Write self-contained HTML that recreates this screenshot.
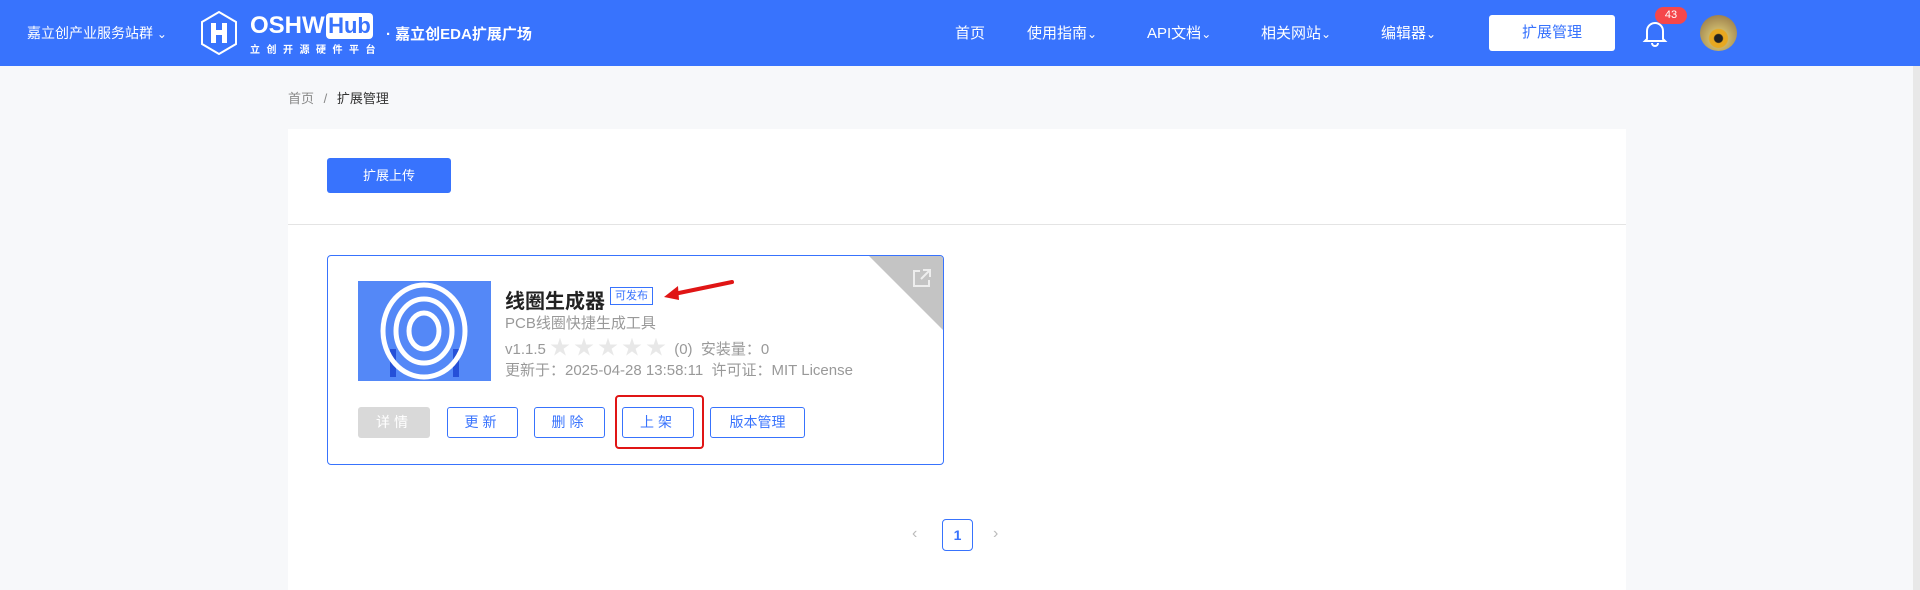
<!DOCTYPE html>
<html><head><meta charset="utf-8"><style>
*{margin:0;padding:0;box-sizing:border-box}
body{width:1920px;height:590px;overflow:hidden;background:#f7f8fa;font-family:"Liberation Sans","Noto Sans CJK SC",sans-serif;position:relative}
.a{position:absolute;white-space:nowrap}
.hd{position:absolute;left:0;top:0;width:1920px;height:66px;background:#3873fd}
.nav{color:#fff;font-size:15px;top:22px}
.btn{position:absolute;border:1px solid #3873fd;border-radius:3px;color:#3873fd;font-size:14px;text-align:center;line-height:29px;background:#fff;letter-spacing:4px}
.ln{font-size:15px;color:#999;line-height:20px;height:20px}
</style></head><body>
<div class="hd"></div>
<div class="a" style="left:27px;top:23px;color:#fff;font-size:14px">嘉立创产业服务站群 <span style="font-size:12px">&#8964;</span></div>
<svg class="a" style="left:200px;top:11px" width="38" height="44" viewBox="0 0 38 44"><polygon points="19,1 36,11 36,33 19,43 2,33 2,11" fill="none" stroke="#fff" stroke-width="2"/><path d="M11,12 V32 H16 V24 H22 V32 H27 V12 H22 V19 H16 V12 Z" fill="#fff"/></svg>
<div class="a" style="left:250px;top:12px;color:#fff;font-size:24px;font-weight:bold">OSHW</div>
<div class="a" style="left:326px;top:13px;width:47px;height:26px;background:#fff;border-radius:4px;color:#3873fd;font-size:22px;font-weight:bold;text-align:center;line-height:26px">Hub</div>
<div class="a" style="left:250px;top:41px;color:#fff;font-size:10px;letter-spacing:6.5px;font-weight:bold">立创开源硬件平台</div>
<div class="a" style="left:386px;top:23px;color:#fff;font-size:15px;font-weight:bold">· 嘉立创EDA扩展广场</div>
<div class="a nav" style="left:955px">首页</div>
<div class="a nav" style="left:1027px">使用指南<span style="font-size:12px">&#8964;</span></div>
<div class="a nav" style="left:1147px">API文档<span style="font-size:12px">&#8964;</span></div>
<div class="a nav" style="left:1261px">相关网站<span style="font-size:12px">&#8964;</span></div>
<div class="a nav" style="left:1381px">编辑器<span style="font-size:12px">&#8964;</span></div>
<div class="a" style="left:1489px;top:15px;width:126px;height:36px;background:#fff;border-radius:3px;color:#3873fd;font-size:15px;text-align:center;line-height:36px">扩展管理</div>
<svg class="a" style="left:1642px;top:19px" width="26" height="28" viewBox="0 0 26 28"><path d="M5,20 V12 A8,8 0 0 1 21,12 V20 L23,22 H3 Z M10,24 A3,3 0 0 0 16,24" fill="none" stroke="#fff" stroke-width="2"/></svg>
<div class="a" style="left:1655px;top:7px;width:32px;height:17px;background:#f5474b;border-radius:9px;color:#fff;font-size:11px;text-align:center;line-height:17px">43</div>
<div class="a" style="left:1700px;top:15px;width:37px;height:36px;border-radius:50%;background:radial-gradient(circle at 50% 65%,#222 0 4px,#e8a820 5px 9px,#c9b46a 10px,#8a6a40)"></div>
<div class="a" style="left:1913px;top:66px;width:7px;height:524px;background:#e8e8e8"></div>
<div class="a" style="left:288px;top:88px;font-size:13px;color:#888">首页 <span style="margin:0 6px">/</span> <span style="color:#333">扩展管理</span></div>
<div class="a" style="left:288px;top:129px;width:1338px;height:461px;background:#fff"></div>
<div class="a" style="left:327px;top:158px;width:124px;height:35px;background:#3873fd;border-radius:3px;color:#fff;font-size:13px;text-align:center;line-height:35px">扩展上传</div>
<div class="a" style="left:288px;top:224px;width:1338px;height:1px;background:#e4e4e4"></div>
<div class="a" style="left:327px;top:255px;width:617px;height:210px;border:1px solid #3873fd;border-radius:4px;background:#fff;overflow:hidden">
<div class="a" style="right:0;top:0;width:0;height:0;border-top:74px solid #c4c4c4;border-left:74px solid transparent"></div>
<svg class="a" style="left:583px;top:12px" width="22" height="20" viewBox="0 0 22 20"><path d="M9,3 H3 V18 H18 V12 M12,2 H19 V9 M19,2 L10,11" fill="none" stroke="#eee" stroke-width="2"/></svg>
</div>
<svg class="a" style="left:358px;top:281px" width="133" height="100" viewBox="0 0 133 100"><rect width="133" height="100" fill="#5488f7"/><rect x="32" y="68" width="6" height="28" fill="#2550d8"/><rect x="95" y="68" width="6" height="28" fill="#2550d8"/><g fill="none" stroke="#fff" stroke-width="5"><ellipse cx="66" cy="50" rx="41" ry="46"/><ellipse cx="66" cy="50" rx="28" ry="32"/><ellipse cx="66" cy="50" rx="15" ry="18"/></g></svg>
<div class="a" style="left:505px;top:285px;font-size:20px;font-weight:bold;color:#222">线圈生成器</div>
<div class="a" style="left:610px;top:287px;width:43px;height:18px;border:1px solid #3873fd;color:#3873fd;font-size:11px;text-align:center;line-height:16px">可发布</div>
<svg class="a" style="left:660px;top:277px" width="80" height="28" viewBox="0 0 80 28"><path d="M72,5 L14,17" stroke="#e01515" stroke-width="4" stroke-linecap="round"/><path d="M4,20 L18,9 L19,23 Z" fill="#e01515"/></svg>
<div class="a ln" style="left:505px;top:314px">PCB线圈快捷生成工具</div>
<div class="a ln" style="left:505px;top:338px">v1.1.5 <span style="color:#e8e8e8;font-size:20px;line-height:20px;letter-spacing:4px">★★★★★</span> (0)&nbsp; 安装量：0</div>
<div class="a ln" style="left:505px;top:361px">更新于：2025-04-28 13:58:11&nbsp; 许可证：MIT License</div>
<div class="a" style="left:358px;top:407px;width:72px;height:31px;background:#d9d9d9;border-radius:3px;color:#fff;font-size:14px;text-align:center;line-height:31px;letter-spacing:4px">详情</div>
<div class="btn" style="left:447px;top:407px;width:71px;height:31px">更新</div>
<div class="btn" style="left:534px;top:407px;width:71px;height:31px">删除</div>
<div class="btn" style="left:622px;top:407px;width:72px;height:31px">上架</div>
<div class="btn" style="left:710px;top:407px;width:95px;height:31px;letter-spacing:0">版本管理</div>
<div class="a" style="left:615px;top:395px;width:89px;height:54px;border:2px solid #e01515;border-radius:4px"></div>
<div class="a" style="left:912px;top:525px;color:#bbb;font-size:16px">&lsaquo;</div>
<div class="a" style="left:942px;top:519px;width:31px;height:32px;border:1px solid #3873fd;border-radius:4px;color:#3873fd;font-size:14px;text-align:center;line-height:30px;font-weight:bold">1</div>
<div class="a" style="left:993px;top:525px;color:#bbb;font-size:16px">&rsaquo;</div>
</body></html>
